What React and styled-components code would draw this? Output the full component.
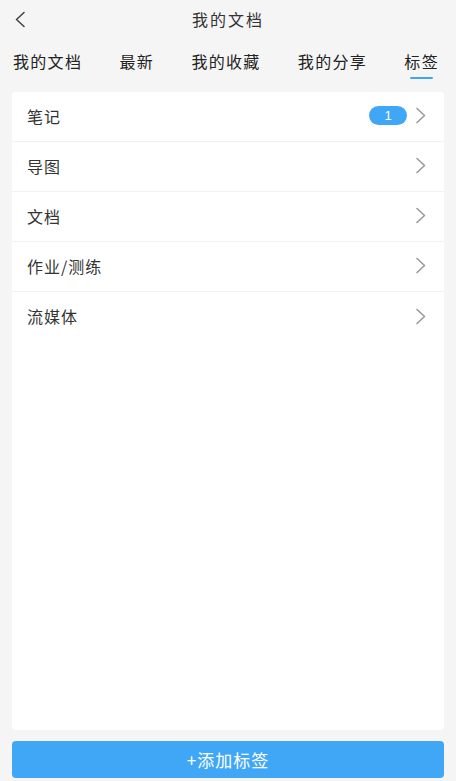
import React from "react";
import styled, { createGlobalStyle } from "styled-components";

const tabs = ["我的文档", "最新", "我的收藏", "我的分享", "标签"];
const tags = [
    { name: "笔记", count: 1 },
    { name: "导图" },
    { name: "文档" },
    { name: "作业/测练" },
    { name: "流媒体" },
];

const Chevron = ({ left }) => (
    <svg width="12" height="17" viewBox="0 0 12 17" fill="none">
        <path
            d={left ? "M10 1.5 L2.5 8.5 L10 15.5" : "M2 1.5 L9.5 8.5 L2 15.5"}
            stroke={left ? "#444" : "#9a9a9a"}
            strokeWidth="1.6"
            strokeLinecap="round"
            strokeLinejoin="round"
        />
    </svg>
);

const App = () => {
    return (
        <>
            <GlobalStyle />
            <Page>
                <Header>
                    <BackButton>
                        <Chevron left />
                    </BackButton>
                    <Title>我的文档</Title>
                </Header>

                <Tabs>
                    {tabs.map((t, i) => (
                        <Tab key={t} $active={i === tabs.length - 1}>
                            {t}
                        </Tab>
                    ))}
                </Tabs>

                <Card>
                    {tags.map((tag) => (
                        <Row key={tag.name}>
                            <RowLabel>{tag.name}</RowLabel>
                            <RowRight>
                                {tag.count ? <Badge>{tag.count}</Badge> : null}
                                <Chevron />
                            </RowRight>
                        </Row>
                    ))}
                </Card>

                <AddButton>+添加标签</AddButton>
            </Page>
        </>
    );
};

export default App;

const GlobalStyle = createGlobalStyle`
    html, body {
        margin: 0;
        padding: 0;
        background: #f5f5f5;
    }
    body {
        font-family: "Noto Sans CJK SC", "Noto Sans", sans-serif;
        color: #333;
    }
`;

const Page = styled.div`
    height: 781px;
    display: flex;
    flex-direction: column;
    background: #f5f5f5;
    overflow: hidden;
`;

const Header = styled.header`
    height: 38px;
    display: flex;
    align-items: center;
    justify-content: center;
    position: relative;
`;

const BackButton = styled.div`
    position: absolute;
    left: 14px;
    top: 11px;
    display: flex;
`;

const Title = styled.h1`
    margin: 0;
    font-size: 16px;
    font-weight: 400;
    letter-spacing: 2px;
    color: #333;
`;

const Tabs = styled.nav`
    height: 46px;
    display: flex;
    align-items: center;
    justify-content: space-between;
    padding: 0 17px 0 13px;
`;

const Tab = styled.div`
    position: relative;
    font-size: 16px;
    letter-spacing: 1.3px;
    color: #222;
    line-height: 22px;

    &::after {
        content: "";
        display: ${(p) => (p.$active ? "block" : "none")};
        position: absolute;
        left: 50%;
        bottom: -7px;
        width: 23px;
        height: 2px;
        margin-left: -12px;
        background: #3ea6f7;
        border-radius: 1px;
    }
`;

const Card = styled.section`
    flex: 1;
    margin: 8px 12px 0;
    background: #fff;
    border-radius: 4px;
`;

const Row = styled.div`
    height: 50px;
    display: flex;
    align-items: center;
    justify-content: space-between;
    padding: 0 17px 2px 15px;
    border-bottom: 1px solid #f1f1f1;
    box-sizing: border-box;

    &:last-child {
        border-bottom: none;
    }
`;

const RowLabel = styled.span`
    font-size: 16px;
    letter-spacing: 1px;
    color: #333;
`;

const RowRight = styled.div`
    display: flex;
    align-items: center;
    gap: 8px;
`;

const Badge = styled.span`
    width: 38px;
    height: 19px;
    border-radius: 10px;
    background: #40a7f6;
    color: #fff;
    font-family: "Liberation Sans", Arial, sans-serif;
    font-size: 13px;
    display: flex;
    align-items: center;
    justify-content: center;
`;

const AddButton = styled.button`
    margin: 11px 12px 3px;
    height: 37px;
    border: none;
    border-radius: 4px;
    background: #40a7f6;
    color: #fff;
    font-family: "Noto Sans CJK SC", "Noto Sans", sans-serif;
    font-size: 17px;
    letter-spacing: 1px;
    cursor: pointer;
`;
